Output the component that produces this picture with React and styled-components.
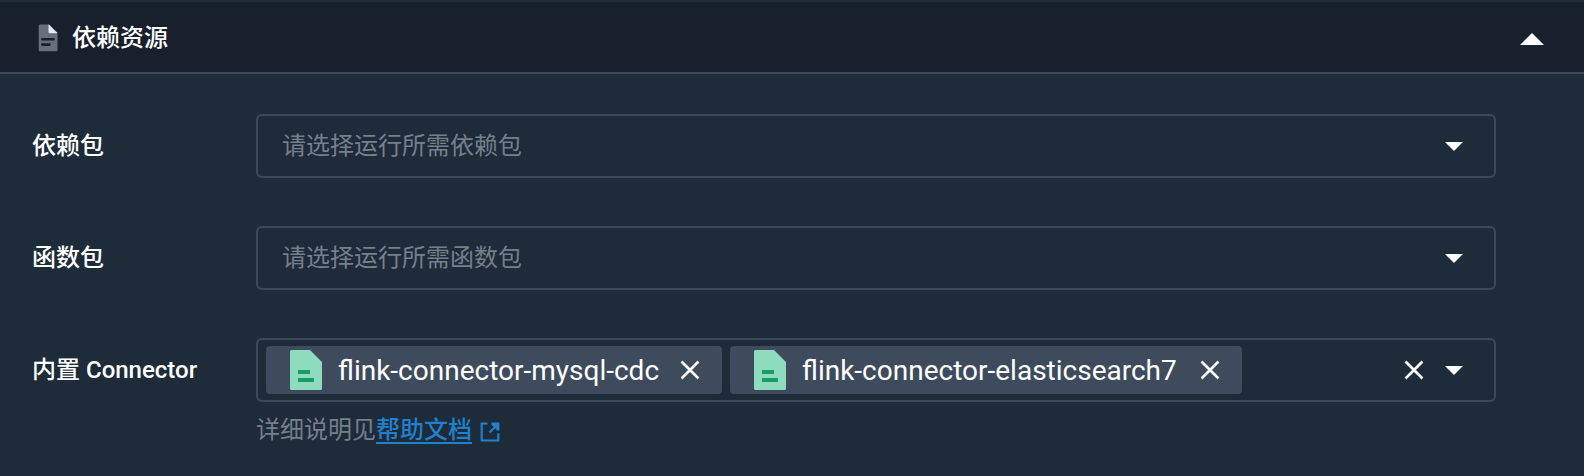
import React from 'react';
import styled, { createGlobalStyle } from 'styled-components';

const GlobalStyle = createGlobalStyle`
  * { box-sizing: border-box; }
  body {
    margin: 0;
    background: #1e2b38;
    font-family: Roboto, "Noto Sans CJK SC", sans-serif;
    font-size: 24px;
    color: #fff;
    -webkit-font-smoothing: antialiased;
  }
`;

const Panel = styled.section`
  height: 476px;
  background: #1e2b38;
  overflow: hidden;
`;

const Header = styled.header`
  display: flex;
  align-items: center;
  height: 74px;
  padding: 3px 40px 0 38px;
  border-top: 2px solid #1f2d39;
  border-bottom: 2px solid #3d4a5b;
  background: #17202c;
`;

const Title = styled.h2`
  flex: 1;
  display: flex;
  align-items: center;
  gap: 14px;
  margin: 0;
  padding-bottom: 2px;
  font-size: 24px;
  line-height: 36px;
  font-weight: 500;
`;

const Form = styled.div`
  display: flex;
  flex-direction: column;
  gap: 48px;
  padding: 40px 88px 0 32px;
`;

const Row = styled.div`
  display: flex;
  align-items: flex-start;
`;

const Label = styled.label`
  width: 224px;
  line-height: 64px;
  font-weight: 500;
`;

const Field = styled.div`
  flex: 1;
`;

const Select = styled.div`
  display: flex;
  align-items: center;
  height: 64px;
  padding: 0 31px 0 ${(p) => (p.$filled ? '8px' : '24px')};
  border: 2px solid #3d4a5c;
  border-radius: 6px;
`;

const Placeholder = styled.span`
  flex: 1;
  color: #74808c;
  line-height: 36px;
`;

const Tags = styled.div`
  flex: 1;
  display: flex;
  gap: 8px;
`;

const Tag = styled.div`
  display: flex;
  align-items: center;
  width: ${(p) => p.$width}px;
  height: 48px;
  padding: 0 22px 0 24px;
  border-radius: 4px;
  background: #3d4b5c;
`;

const TagText = styled.span`
  flex: 1;
  margin-left: 16px;
  padding-top: 2px;
  font-size: 28px;
  line-height: 40px;
  white-space: nowrap;
`;

const Clear = styled.span`
  display: flex;
  margin-right: 21px;
`;

const Help = styled.div`
  display: flex;
  align-items: flex-start;
  margin-top: 12px;
  line-height: 32px;
`;

const HelpText = styled.span`
  color: #74808c;
`;

const HelpLink = styled.a`
  display: flex;
  align-items: flex-end;
  gap: 8px;
  color: #1f80cf;
  font-weight: 500;
`;

const LinkText = styled.span`
  height: 30px;
  border-bottom: 2px solid #1f80cf;
`;

const Svg = styled.svg`
  display: block;
  flex: none;
`;

const ExternalSvg = styled(Svg)`
  margin-bottom: 2px;
`;

const DocIcon = () => (
  <Svg width="20" height="28" viewBox="0 0 20 28">
    <path d="M2 0.500H10L19.500 10V25.700a1.500 1.500 0 0 1-1.500 1.500H2.200a1.500 1.500 0 0 1-1.500-1.500V2A1.500 1.500 0 0 1 2 0.500Z" fill="#66707a" />
    <path d="M10.500 0L19.800 9.300H12a1.500 1.500 0 0 1-1.500-1.500Z" fill="#e6e8ea" />
    <path d="M4.300 15.300H15.500M4.300 20.600H11.500" stroke="#17202c" strokeWidth="2.600" strokeLinecap="round" />
  </Svg>
);

const FileIcon = () => (
  <Svg width="32" height="40" viewBox="0 0 32 40">
    <path d="M1.500 0H20L32 12V38.500a1.500 1.500 0 0 1-1.500 1.500H1.500A1.500 1.500 0 0 1 0 38.500V1.500A1.500 1.500 0 0 1 1.500 0Z" fill="#8fdbbe" />
    <path d="M8 20H20V24H8ZM8 28H24V32H8Z" fill="#1c9a66" />
  </Svg>
);

const Cross = () => (
  <Svg width="20" height="20" viewBox="0 0 20 20">
    <path d="M1.500 1.500L18.500 18.500M18.500 1.500L1.500 18.500" stroke="#fff" strokeWidth="2.700" />
  </Svg>
);

const ArrowDown = () => (
  <Svg width="18" height="9" viewBox="0 0 18 9">
    <path d="M0 0H18L9 9Z" fill="#fff" />
  </Svg>
);

const ArrowUp = () => (
  <Svg width="24" height="12" viewBox="0 0 24 12">
    <path d="M0 12H24L12 0Z" fill="#fff" />
  </Svg>
);

const ExternalIcon = () => (
  <ExternalSvg width="20" height="20" viewBox="0 0 20 20">
    <path d="M7.500 1.500H1.700V18.500H18.300V11.500M17.500 2.500L9.500 10.500" fill="none" stroke="#1f80cf" strokeWidth="2.200" />
    <path d="M11.500 0.500H19.400V8.500H17.200L11.500 2.700Z" fill="#1f80cf" />
  </ExternalSvg>
);

const tags = [
  { name: 'flink-connector-mysql-cdc', width: 456 },
  { name: 'flink-connector-elasticsearch7', width: 512 },
];

const EmptySelect = ({ label, placeholder }) => (
  <Row>
    <Label>{label}</Label>
    <Field>
      <Select>
        <Placeholder>{placeholder}</Placeholder>
        <ArrowDown />
      </Select>
    </Field>
  </Row>
);

export default function App() {
  return (
    <Panel>
      <GlobalStyle />
      <Header>
        <Title>
          <DocIcon />
          依赖资源
        </Title>
        <ArrowUp />
      </Header>
      <Form>
        <EmptySelect label="依赖包" placeholder="请选择运行所需依赖包" />
        <EmptySelect label="函数包" placeholder="请选择运行所需函数包" />
        <Row>
          <Label>内置 Connector</Label>
          <Field>
            <Select $filled>
              <Tags>
                {tags.map((t) => (
                  <Tag key={t.name} $width={t.width}>
                    <FileIcon />
                    <TagText>{t.name}</TagText>
                    <Cross />
                  </Tag>
                ))}
              </Tags>
              <Clear><Cross /></Clear>
              <ArrowDown />
            </Select>
            <Help>
              <HelpText>详细说明见</HelpText>
              <HelpLink>
                <LinkText>帮助文档</LinkText>
                <ExternalIcon />
              </HelpLink>
            </Help>
          </Field>
        </Row>
      </Form>
    </Panel>
  );
}
